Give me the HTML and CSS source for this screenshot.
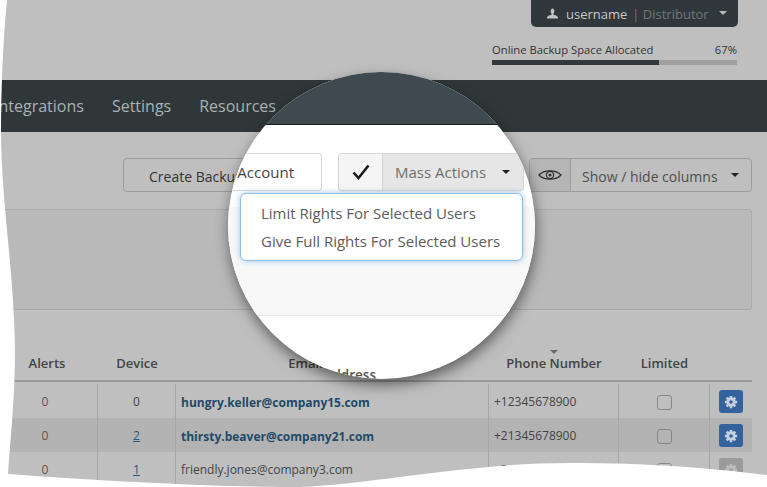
FILE: index.html
```html
<!DOCTYPE html>
<html lang="en">
<head>
<meta charset="utf-8">
<title>Users</title>
<link rel="stylesheet" href="styles.css">
</head>
<body>
<svg class="defs" width="0" height="0" aria-hidden="true">
  <symbol id="gear" viewBox="0 0 24 24">
    <circle cx="12" cy="12" r="5.6" fill="none" stroke="currentColor" stroke-width="5"/>
    <path d="M12 1.5v5M12 17.5v5M1.5 12h5M17.5 12h5M4.6 4.6l3.5 3.5M15.9 15.9l3.5 3.5M4.6 19.4l3.5-3.5M15.9 8.1l3.5-3.5" stroke="currentColor" stroke-width="4.4" fill="none"/>
  </symbol>
</svg>
<div class="stage">
  <header class="top">
    <div class="user">
      <svg class="user-icon" viewBox="0 0 12 11"><path d="M4 3C4 1 5 0 6 0s2 1 2 3c0 1.200-.5 2-1 2.600v1.200c1.500.5 4.500 1 5 3V11H0V9.800c.5-2 3.500-2.500 5-3V5.600C4.500 5 4 4.200 4 3z"/></svg>
      <span class="user-name">username</span>
      <span class="user-role">| Distributor</span>
      <span class="caret caret-user"></span>
    </div>
    <div class="quota">
      <div class="quota-text"><span>Online Backup Space Allocated</span><span>67%</span></div>
      <div class="quota-bar"><div class="quota-fill" style="width:68%"></div></div>
    </div>
  </header>
  <nav class="nav">
    <span>Integrations</span><span>Settings</span><span>Resources</span>
  </nav>
  <div class="toolbar">
    <button class="btn-create">Create Backup Account</button>
    <div class="columns-group">
      <span class="eye-addon">
        <svg class="eye" viewBox="0 0 24 12"><path d="M1 6C6 .5 18 .5 23 6 18 11.500 6 11.500 1 6z" fill="none" stroke="#2d2d2d" stroke-width="1.200"/><circle cx="12" cy="6" r="3.600" fill="none" stroke="#2d2d2d" stroke-width="1.200"/><circle cx="12" cy="6" r="1.500" fill="#2d2d2d"/></svg>
      </span>
      <span class="columns-label">Show / hide columns</span>
      <span class="caret caret-columns"></span>
    </div>
  </div>
  <div class="panel"></div>
  <div class="table">
    <div class="thead">
      <div>Alerts</div><div>Device</div><div>Email Address</div><div class="sorted">Phone Number</div><div>Limited</div><div></div>
    </div>
    <div class="row">
      <div class="cell center alerts">0</div><div class="cell center">0</div>
      <div class="cell strong">hungry.keller@company15.com</div>
      <div class="cell">+12345678900</div>
      <div class="cell center"><span class="check"></span></div>
      <div class="cell center"><span class="gear-btn"><svg class="gear"><use href="#gear"/></svg></span></div>
    </div>
    <div class="row shaded">
      <div class="cell center alerts">0</div><div class="cell center"><a class="link">2</a></div>
      <div class="cell strong">thirsty.beaver@company21.com</div>
      <div class="cell">+21345678900</div>
      <div class="cell center"><span class="check"></span></div>
      <div class="cell center"><span class="gear-btn"><svg class="gear"><use href="#gear"/></svg></span></div>
    </div>
    <div class="row">
      <div class="cell center alerts">0</div><div class="cell center"><a class="link">1</a></div>
      <div class="cell">friendly.jones@company3.com</div>
      <div class="cell">+31345678900</div>
      <div class="cell center"><span class="check"></span></div>
      <div class="cell center"><span class="gear-btn off"><svg class="gear"><use href="#gear"/></svg></span></div>
    </div>
  </div>

  <div class="lens">
    <div class="lens-nav"></div>
    <div class="lens-tools">
      <div class="lens-create">Create Backup Account</div>
      <div class="mass">
        <span class="mass-check">
          <svg class="tick" viewBox="0 0 18 16"><path d="M1.500 8.500 6.500 14 16.500 1.500" fill="none" stroke="#1c1c1c" stroke-width="2.600"/></svg>
        </span>
        <span class="mass-label">Mass Actions</span>
        <span class="caret caret-mass"></span>
      </div>
    </div>
    <div class="lens-panel">
      <div class="menu">
        <div>Limit Rights For Selected Users</div>
        <div>Give Full Rights For Selected Users</div>
      </div>
    </div>
    <div class="lens-head">Email Address</div>
  </div>

  <svg class="frame" viewBox="0 0 767 487" aria-hidden="true">
    <path d="M0 0H7C3 40 1 90 1 130 1 200 14 270 15 350 15 400 10 440 8 474 100 481 220 487 290 487 360 487 460 463 570 463 650 463 710 468 767 475V487H0Z" fill="#fff"/>
  </svg>
</div>
</body>
</html>
```
FILE: styles.css
```css
* { box-sizing: border-box; }
html, body { margin: 0; padding: 0; }
body { width: 767px; height: 487px; overflow: hidden; background: #fff; font-family: "Open Sans", "Liberation Sans", sans-serif; }
.defs { position: absolute; }

.stage { position: relative; width: 767px; height: 487px; overflow: hidden; background: #bfbfbf; display: flex; flex-direction: column; }

.top { height: 80px; flex: none; display: flex; flex-direction: column; align-items: flex-end; padding-right: 29px; }
.user { width: 207px; height: 27px; background: #30383b; border-radius: 0 0 5px 5px; display: flex; align-items: center; padding-left: 16px; font-size: 13px; white-space: nowrap; }
.user-icon { width: 11px; height: 11px; fill: #bfc4c5; flex: none; margin-right: 8px; }
.user-name { color: #c4c9ca; }
.user-role { color: #6d777b; margin-left: 5px; }
.caret { display: block; flex: none; width: 0; height: 0; border-left: 4px solid transparent; border-right: 4px solid transparent; border-top: 4px solid #222; }
.caret-user { border-top-color: #b4b9bb; margin-left: 10px; margin-top: -2px; }

.quota { width: 245px; margin-top: 15px; margin-right: 1px; }
.quota-text { display: flex; justify-content: space-between; font-size: 11.250px; line-height: 16px; color: #333; }
.quota-bar { height: 5px; margin-top: 2px; background: #a0a0a0; }
.quota-fill { height: 100%; background: #33393d; }

.nav { height: 52px; flex: none; background: #2f3739; display: flex; align-items: center; gap: 28px; margin-left: -6px; padding-bottom: 1px; font-size: 16px; color: #a8b2b5; white-space: nowrap; }

.toolbar { height: 60px; flex: none; padding: 26px 15px 0 123px; display: flex; justify-content: space-between; align-items: flex-start; }
.btn-create { width: 200px; height: 34px; border: 1px solid #9c9c9c; border-radius: 4px; background: transparent; padding: 2px 0 0 25px; text-align: left; font: 14px "Open Sans", sans-serif; color: #333; white-space: nowrap; }
.columns-group { width: 223px; height: 34px; border: 1px solid #9c9c9c; border-radius: 4px; display: flex; align-items: center; }
.eye-addon { width: 41px; height: 100%; background: #b5b5b5; border-right: 1px solid #9c9c9c; border-radius: 3px 0 0 3px; display: flex; align-items: center; justify-content: center; }
.eye { width: 24px; height: 12px; }
.columns-label { font-size: 14px; color: #4e4e4e; margin-left: 11px; padding-top: 2px; white-space: nowrap; }
.caret-columns { margin-left: 13px; }

.panel { width: 752px; height: 101px; flex: none; margin-top: 17px; background: #b9b9b9; border: 1px solid #ababab; border-left: 0; border-radius: 0 4px 4px 0; }

.table { width: 752px; flex: none; color: #444; font-size: 12px; }
.thead, .row { display: grid; grid-template-columns: 97px 78px 313px 130px 91px 43px; }
.thead { height: 72px; align-items: end; text-align: center; padding-bottom: 8px; border-bottom: 2px solid #989898; font-size: 13px; font-weight: 600; line-height: 18px; color: #434343; }
.thead > div { padding-left: 2px; }
.thead > div:first-child { padding-right: 5px; }
.sorted { position: relative; }
.sorted::before { content: ""; position: absolute; left: 50%; top: -4px; margin-left: -3px; border-left: 4px solid transparent; border-right: 4px solid transparent; border-top: 4px solid #6a6a6a; }
.thead + .row { margin-top: 2px; }
.row { height: 34px; }
.row.shaded { background: #b3b3b3; }
.cell { display: flex; align-items: center; padding-left: 5px; border-left: 1px solid #a6a6a6; white-space: nowrap; }
.cell.center { justify-content: center; padding-left: 0; }
.cell.alerts { border-left: 0; padding-right: 7px; color: #555; }
.cell.strong { font-weight: 700; color: #1e4a68; padding-top: 3px; }
.link { color: #27597c; text-decoration: underline; }
.check { width: 15px; height: 15px; margin-top: 3px; border: 1px solid #878787; border-radius: 3px; }
.gear-btn { width: 24px; height: 23px; margin-top: 1px; border-radius: 3px; background: #33629c; color: #c6d0dc; display: flex; align-items: center; justify-content: center; }
.gear-btn.off { background: #9a9a9a; color: #bdbdbd; }
.gear { width: 14px; height: 14px; }

.lens { position: absolute; left: 228px; top: 72px; width: 307px; height: 307px; border-radius: 50%; overflow: hidden; background: #fff; box-shadow: 1px 6px 14px rgba(0,0,0,.5); display: flex; flex-direction: column; }
.lens-nav { height: 53px; flex: none; background: #3e4a50; border-bottom: 1px solid #151a1c; }
.lens-tools { height: 82px; flex: none; padding-top: 28px; display: flex; align-items: flex-start; gap: 16px; }
.lens-create { width: 94px; height: 38px; flex: none; background: #fff; border: 1px solid #d9d9d9; border-left: 0; border-radius: 0 4px 4px 0; display: flex; align-items: center; justify-content: flex-end; padding-right: 27px; font-size: 15px; color: #444; white-space: nowrap; }
.mass { width: 186px; height: 38px; flex: none; background: #e6e6e6; border: 1px solid #d6d6d6; border-radius: 4px; display: flex; align-items: center; box-shadow: 0 1px 2px rgba(0,0,0,.08); }
.mass-check { width: 44px; height: 100%; flex: none; background: #f5f5f5; border-right: 1px solid #d6d6d6; border-radius: 3px 0 0 3px; display: flex; align-items: center; justify-content: center; }
.tick { width: 18px; height: 16px; }
.mass-label { margin-left: 12px; font-size: 15px; color: #6f6f6f; white-space: nowrap; }
.caret-mass { margin-left: 16px; margin-top: -1px; }

.lens-panel { height: 109px; flex: none; background: #f8f8f8; border-bottom: 1px solid #e6e6e6; padding-left: 12px; }
.menu { width: 283px; height: 68px; margin-top: -14px; position: relative; background: #fff; border: 1px solid #8fbde6; border-radius: 6px; box-shadow: 0 0 6px rgba(110,170,225,.65); padding: 5px 0 0 20px; font-size: 15px; line-height: 28px; color: #5c5c5c; white-space: nowrap; }

.lens-head { margin-top: 50px; width: 148px; flex: none; text-align: right; font-size: 13.500px; font-weight: 600; line-height: 18px; color: #555; white-space: nowrap; align-self: flex-start; }

.frame { position: absolute; left: 0; top: 0; width: 767px; height: 487px; pointer-events: none; }
```
